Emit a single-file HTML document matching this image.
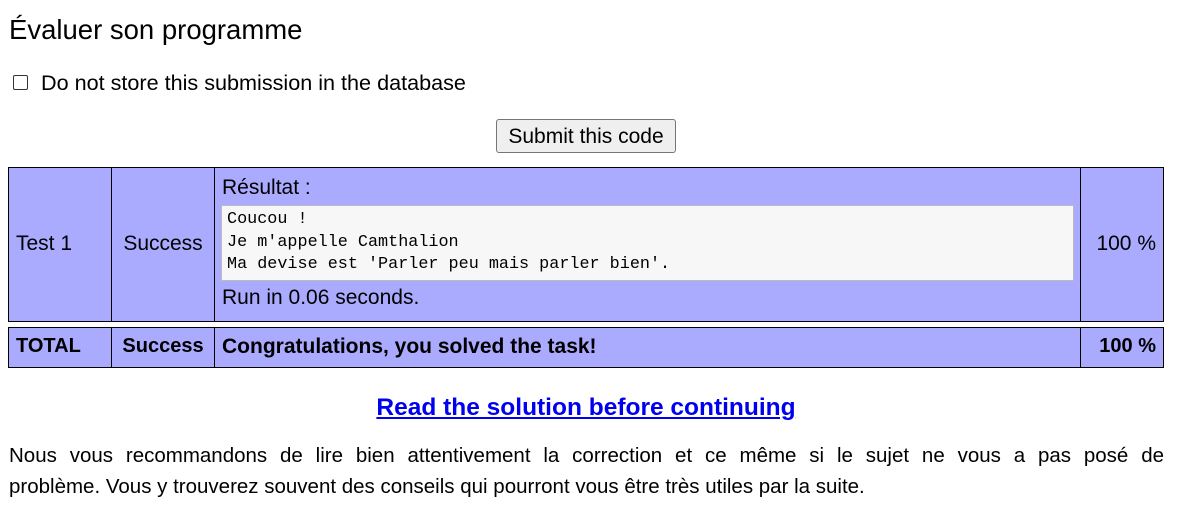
<!DOCTYPE html>
<html><head><meta charset="utf-8"><style>
body{margin:0;background:#fff;font-family:"Liberation Sans","DejaVu Sans",sans-serif;color:#000;font-size:20px;}
h2{position:absolute;left:9px;top:14px;margin:0;font-weight:normal;font-size:27.5px;}
.cb{position:absolute;left:13px;top:75px;width:13px;height:13px;border:1px solid #333;border-radius:2px;background:#fff;}
.cbl{position:absolute;left:41px;top:70px;font-size:21.6px;}
.btn{position:absolute;left:496px;top:119px;width:180px;height:34px;border:1px solid #767676;border-radius:3px;background:#efefef;font-size:21px;text-align:center;line-height:33px;box-sizing:border-box;}
.r{position:absolute;background:#aaaaff;border:1px solid #000;box-sizing:border-box;}
.c{position:absolute;top:0;bottom:0;border-left:1px solid #000;}
.t{position:absolute;}
.ctr{position:absolute;left:111px;width:104px;text-align:center;}
.rt{position:absolute;left:1080px;width:76px;text-align:right;}
pre{position:absolute;left:221px;top:205px;width:853px;height:76px;margin:0;background:#f7f7f7;border:1px solid #bbb;box-sizing:border-box;font-family:"Liberation Mono","DejaVu Sans Mono",monospace;font-size:16.8px;line-height:22.5px;padding:3px 5px;}
b{font-weight:bold;}
a{position:absolute;left:0;width:1172px;text-align:center;top:394px;color:#0000ee;font-weight:bold;font-size:24.5px;text-decoration:underline;}
p{position:absolute;left:9px;top:440px;width:1155px;margin:0;font-size:20.5px;line-height:31px;}
.l1{display:block;text-align:justify;text-align-last:justify;}
</style></head><body>
<h2>Évaluer son programme</h2>
<div class="cb"></div><div class="cbl">Do not store this submission in the database</div>
<div class="btn">Submit this code</div>
<div class="r" style="left:8px;top:167px;width:1156px;height:155px">
 <div class="c" style="left:102px"></div><div class="c" style="left:205px"></div><div class="c" style="left:1071px"></div>
</div>
<div class="t" style="left:16px;top:232px;font-size:21px">Test 1</div>
<div class="ctr" style="top:232px;font-size:21px">Success</div>
<div class="t" style="left:222px;top:176px;font-size:21px">Résultat :</div>
<pre>Coucou !
Je m'appelle Camthalion
Ma devise est 'Parler peu mais parler bien'.</pre>
<div class="t" style="left:222px;top:286px;font-size:21px">Run in 0.06 seconds.</div>
<div class="rt" style="top:232px;font-size:21px">100 %</div>
<div class="r" style="left:8px;top:327px;width:1156px;height:41px">
 <div class="c" style="left:102px"></div><div class="c" style="left:205px"></div><div class="c" style="left:1071px"></div>
</div>
<div class="t" style="left:16px;top:335px"><b>TOTAL</b></div>
<div class="ctr" style="top:335px"><b>Success</b></div>
<div class="t" style="left:222px;top:335px;font-size:21px"><b>Congratulations, you solved the task!</b></div>
<div class="rt" style="top:335px"><b>100 %</b></div>
<a>Read the solution before continuing</a>
<p><span class="l1">Nous vous recommandons de lire bien attentivement la correction et ce même si le sujet ne vous a pas posé de</span>problème. Vous y trouverez souvent des conseils qui pourront vous être très utiles par la suite.</p>
</body></html>
